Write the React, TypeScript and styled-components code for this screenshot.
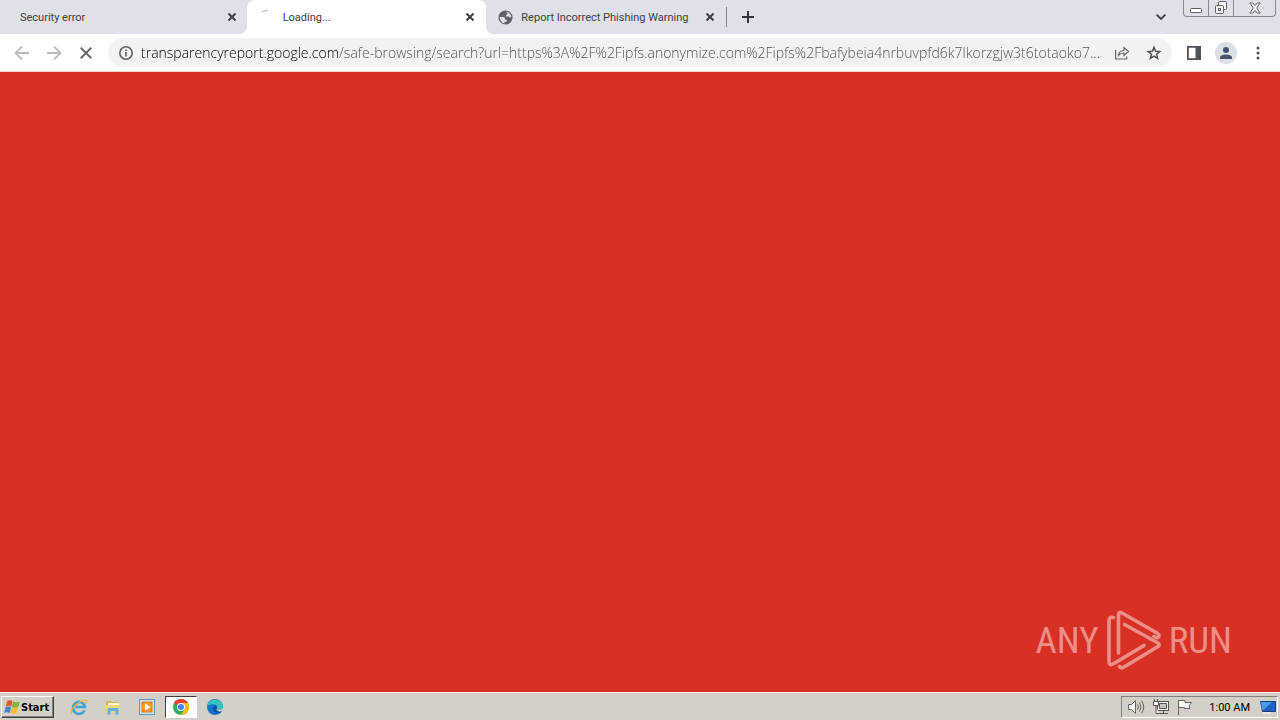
import React from "react";
import styled, { createGlobalStyle } from "styled-components";

const GlobalStyle = createGlobalStyle`
  * { box-sizing: border-box; }
  body { margin: 0; font-family: Roboto, "Noto Sans", sans-serif; }
  button { font: inherit; color: inherit; border: 0; padding: 0; background: none; cursor: default; }
  svg { display: block; flex: none; }
`;

const Desktop = styled.div`
  display: flex;
  flex-direction: column;
  min-height: 100vh;
  background: #d93025;
`;

const TabStrip = styled.header`
  display: flex;
  height: 34px;
  background: #dee1e8;
  color: #3c4043;
`;

const Tabs = styled.div`
  display: flex;
  flex: 0 1 726px;
  min-width: 0;
`;

const Tab = styled.div<{ $active?: boolean }>`
  position: relative;
  display: flex;
  align-items: center;
  flex: 1 1 240px;
  min-width: 0;
  padding: 0 11px 0 12px;
  background: ${(p) => (p.$active ? "#ffffff" : "transparent")};
  border-radius: 8px 8px 0 0;
  z-index: ${(p) => (p.$active ? 1 : 0)};

  &::before,
  &::after {
    content: "";
    display: ${(p) => (p.$active ? "block" : "none")};
    position: absolute;
    bottom: 0;
    width: 8px;
    height: 8px;
  }
  &::before {
    right: 100%;
    background: radial-gradient(circle at 0 0, transparent 8px, #ffffff 8px);
  }
  &::after {
    left: 100%;
    background: radial-gradient(circle at 100% 0, transparent 8px, #ffffff 8px);
  }
`;

const FirstTab = styled(Tab)`
  flex-basis: 247px;
  padding: 0 10px 0 20px;
`;

const TabTitle = styled.button`
  display: flex;
  align-items: center;
  gap: 8px;
  flex: 1;
  min-width: 0;
  height: 34px;
  font-size: 11px;
  line-height: 18px;
  white-space: nowrap;
  overflow: hidden;

  span { padding-top: 2px; }
`;

const IconButton = styled.button<{ $size?: number }>`
  display: flex;
  align-items: center;
  justify-content: center;
  flex: none;
  width: ${(p) => p.$size ?? 32}px;
  height: ${(p) => p.$size ?? 32}px;
`;

const NewTab = styled.div`
  display: flex;
  align-items: center;
  height: 34px;
  gap: 5px;

  &::before {
    content: "";
    width: 1px;
    height: 20px;
    background: #80868b;
  }
`;

const WindowArea = styled.div`
  display: flex;
  align-items: center;
  margin-left: auto;
  gap: 6px;
`;

const Caption = styled.div`
  display: flex;
  align-self: flex-start;
  height: 17px;
  margin-right: 4px;
  border: 1px solid #85898f;
  border-top: 0;
  border-radius: 0 0 4px 4px;
`;

const CaptionButton = styled.button<{ $wide?: boolean }>`
  display: flex;
  align-items: center;
  justify-content: center;
  width: ${(p) => (p.$wide ? 42 : 25)}px;

  &:first-child { width: 24px; }
  & + & { border-left: 1px solid #85898f; }
`;

const Toolbar = styled.nav`
  display: flex;
  align-items: center;
  height: 38px;
  padding: 0 6px;
  background: #ffffff;
  border-bottom: 1px solid #f3d5c8;
  color: #5f6368;
`;

const Omnibox = styled.form`
  display: flex;
  align-items: center;
  flex: 1;
  min-width: 0;
  height: 29px;
  margin: 0 6px;
  padding: 0 2px 0 10px;
  border-radius: 15px;
  background: #f0f2f4;
`;

const Address = styled.input`
  flex: 1;
  min-width: 0;
  height: 24px;
  margin: 0 6px 0 7px;
  padding: 0;
  border: 0;
  outline: 0;
  font-family: "Open Sans", "Noto Sans", sans-serif;
  font-weight: 300;
  font-size: 14px;
  line-height: 24px;
  text-overflow: ellipsis;
  color: #5f6368;
  background: linear-gradient(90deg, #000000 198px, #4a4e53 198px);
  background-clip: text;
  -webkit-text-fill-color: transparent;
`;

const Avatar = styled.span`
  display: flex;
  align-items: center;
  justify-content: center;
  width: 22px;
  height: 22px;
  border-radius: 50%;
  background: #dcdfe4;
`;

const Page = styled.main`
  display: flex;
  flex: 1;
  align-items: flex-end;
  justify-content: flex-end;
  padding: 0 48px 20px 0;
`;

const Watermark = styled.div`
  display: flex;
  align-items: center;
  gap: 7px;
  color: #eb8f87;
  font-family: "Roboto Condensed", "Liberation Sans Narrow", sans-serif;
  font-weight: 400;
  font-size: 37px;
  line-height: 62px;
`;

const Taskbar = styled.footer`
  display: flex;
  align-items: center;
  height: 28px;
  padding: 1px 2px 0 1px;
  background: #d4d0c8;
  border-top: 1px solid #f7eeea;
`;

const StartButton = styled.button`
  display: flex;
  align-items: center;
  gap: 1px;
  width: 53px;
  height: 22px;
  padding-left: 2px;
  margin-right: 9px;
  border: 1px solid;
  border-color: #ffffff #404040 #404040 #ffffff;
  box-shadow: inset -1px -1px 0 #808080;
  color: #000000;
  font-family: "DejaVu Sans Condensed", "DejaVu Sans", sans-serif;
  font-weight: 700;
  font-size: 11px;
`;

const Launcher = styled.button<{ $pressed?: boolean }>`
  display: flex;
  align-items: center;
  justify-content: center;
  width: 32px;
  height: 22px;
  margin-right: 2px;
  border: 1px solid;
  border-color: ${(p) => (p.$pressed ? "#404040 #ffffff #ffffff #404040" : "transparent")};
  background: ${(p) => (p.$pressed ? "#ffffff" : "transparent")};
`;

const Tray = styled.div`
  display: flex;
  align-items: center;
  gap: 8px;
  height: 22px;
  margin-left: auto;
  padding: 0 1px 0 6px;
  border: 1px solid;
  border-color: #808080 #ffffff #ffffff #808080;
  color: #000000;
  font-size: 11px;
`;

const Clock = styled.time`
  margin: 0 2px 0 8px;
  white-space: nowrap;
`;

const Cross = ({ size = 8, width = 2 }: { size?: number; width?: number }) => (
  <svg width={size} height={size} viewBox="0 0 8 8" stroke="currentColor" strokeWidth={(width * 8) / size} fill="none">
    <path d="M.5.5l7 7M7.5.5l-7 7" />
  </svg>
);

const Arrow = ({ back }: { back?: boolean }) => (
  <svg width="16" height="16" viewBox="0 0 16 16" fill="none" stroke="#babcbe" strokeWidth="1.8">
    <path d={back ? "M15 8H2M8 1.5L1.5 8 8 14.5" : "M1 8h13M8 1.5L14.5 8 8 14.5"} />
  </svg>
);

export default function App() {
  return (
    <Desktop>
      <GlobalStyle />
      <TabStrip>
        <Tabs>
          <FirstTab>
            <TabTitle><span>Security error</span></TabTitle>
            <IconButton $size={10} aria-label="Close Security error"><Cross /></IconButton>
          </FirstTab>
          <Tab $active>
            <TabTitle>
              <svg width="16" height="16" viewBox="0 0 16 16" fill="none" stroke="#c6c8cb" strokeWidth="1.5">
                <path d="M3 2.8Q5.500 1 8.500 1.500" />
              </svg>
              <span>Loading...</span>
            </TabTitle>
            <IconButton $size={10} aria-label="Close Loading"><Cross /></IconButton>
          </Tab>
          <Tab>
            <TabTitle>
              <svg width="15" height="15" viewBox="0 0 14 14">
                <circle cx="7" cy="7" r="6.600" fill="#5f6368" />
                <path d="M1.500 6.500h3q2 0 2 1.500t2 1.500q0 1.500-1.500 1.500t-1 1.700Q2 11.500 1.500 6.500zM8 1.600q4 .8 4.500 5-1.500 1-2.500-.6H7.500V4.500q1.500 0 1.300-1.400Q8 2.700 8 1.600z" fill="#dee1e8" />
              </svg>
              <span>Report Incorrect Phishing Warning</span>
            </TabTitle>
            <IconButton $size={10} aria-label="Close Report Incorrect Phishing Warning"><Cross /></IconButton>
          </Tab>
        </Tabs>
        <NewTab>
          <IconButton aria-label="New tab">
            <svg width="12" height="12" viewBox="0 0 12 12" stroke="#303338" strokeWidth="2"><path d="M6 0v12M0 6h12" /></svg>
          </IconButton>
        </NewTab>
        <WindowArea>
          <IconButton aria-label="Search tabs">
            <svg width="10" height="6" viewBox="0 0 10 6" fill="none" stroke="#3c4043" strokeWidth="1.800"><path d="M.6.6L5 5 9.400.6" /></svg>
          </IconButton>
          <Caption>
            <CaptionButton aria-label="Minimize">
              <svg width="12" height="14" viewBox="0 0 12 14" fill="#fff" stroke="#5b5f66"><rect x=".5" y="7.500" width="11" height="4" rx="1" /></svg>
            </CaptionButton>
            <CaptionButton aria-label="Restore">
              <svg width="14" height="14" viewBox="0 0 14 14" fill="#f5f6f8" stroke="#5b5f66">
                <rect x="4.500" y=".5" width="8" height="8" rx="1" />
                <rect x="1.500" y="4.500" width="8" height="8" rx="1" />
                <rect x="4.500" y="7.500" width="2" height="2" />
              </svg>
            </CaptionButton>
            <CaptionButton $wide aria-label="Close window">
              <svg width="12" height="12" viewBox="0 0 12 12" fill="#fff" stroke="#5b5f66" strokeLinejoin="round">
                <path d="M.8 1h3L6 3.500 8.200 1h3L7.700 6l3.500 5h-3L6 8.500 3.800 11h-3L4.300 6z" />
              </svg>
            </CaptionButton>
          </Caption>
        </WindowArea>
      </TabStrip>
      <Toolbar>
        <IconButton aria-label="Back"><Arrow back /></IconButton>
        <IconButton aria-label="Forward"><Arrow /></IconButton>
        <IconButton aria-label="Stop loading"><Cross size={12} width={1.8} /></IconButton>
        <Omnibox>
          <svg width="16" height="16" viewBox="0 0 16 16" fill="none" stroke="#5f6368" strokeWidth="1.600">
            <circle cx="8" cy="8" r="6.200" /><path d="M8 7v4.500M8 4.400V6" />
          </svg>
          <Address
            aria-label="Address"
            readOnly
            value="transparencyreport.google.com/safe-browsing/search?url=https%3A%2F%2Fipfs.anonymize.com%2Fipfs%2Fbafybeia4nrbuvpfd6k7lkorzgjw3t6totaoko7..."
          />
          <IconButton type="button" aria-label="Share">
            <svg width="16" height="16" viewBox="0 0 16 16" fill="none" stroke="#5f6368" strokeWidth="1.200">
              <path d="M1.600 5v9h11v-2.500M4.500 10.500Q5 5.500 10 5.500V2.500l4.500 4-4.500 4V8Q6.500 8 4.500 10.500z" />
            </svg>
          </IconButton>
          <IconButton type="button" aria-label="Bookmark this tab">
            <svg width="16" height="16" viewBox="0 0 16 16" fill="none" stroke="#4d5156" strokeWidth="1.500">
              <path d="M8 2.300l1.600 3.900 4.200.3-3.200 2.800 1 4.100L8 11.200l-3.600 2.200 1-4.100-3.200-2.800 4.200-.3z" />
            </svg>
          </IconButton>
        </Omnibox>
        <IconButton aria-label="Side panel">
          <svg width="14" height="14" viewBox="0 0 14 14" fill="#4f5257">
            <path fillRule="evenodd" d="M0 0h14v14H0zM1.800 1.800v10.400H8.500V1.800z" />
          </svg>
        </IconButton>
        <IconButton aria-label="Profile">
          <Avatar>
            <svg width="12" height="12" viewBox="0 0 12 12" fill="#47536e">
              <circle cx="6" cy="3" r="3" /><path d="M0 12V10Q1 7.500 6 7.500T12 10v2z" />
            </svg>
          </Avatar>
        </IconButton>
        <IconButton aria-label="Menu">
          <svg width="4" height="14" viewBox="0 0 4 14" fill="#4f5257">
            <circle cx="2" cy="2" r="1.500" /><circle cx="2" cy="7" r="1.500" /><circle cx="2" cy="12" r="1.500" />
          </svg>
        </IconButton>
      </Toolbar>
      <Page>
        <Watermark>
          <span>ANY</span>
          <svg width="56" height="62" viewBox="0 0 56 62" fill="none" stroke="#eb8f87" strokeWidth="3.600" strokeLinejoin="round" strokeLinecap="round">
            <path d="M12.500 43V5Q12.500 1 16 3L51 23Q54 25 52.500 27 51 28.500 48 26.500" />
            <path d="M7.500 7.500Q3 6.500 3 11V51Q3 56 7 54L38 35.500" />
            <path d="M18.500 14.500L52 33Q54.500 34.500 52 36.500L18 57Q15 59 13.500 56.500" />
          </svg>
          <span>RUN</span>
        </Watermark>
      </Page>
      <Taskbar>
        <StartButton>
          <svg width="16" height="16" viewBox="0 0 16 16">
            <path d="M3.200 2Q6 .5 8.500 2L7.300 7.700Q5 6 1.800 7.500z" fill="#e4572b" />
            <path d="M9 2.500q3 1.500 6.800 0l-1.500 5.700Q11 9.500 7.800 8z" fill="#7fb93c" />
            <path d="M1.700 8.100Q4.500 6.800 7.100 8.300l-1.300 5.700Q3.500 12.500.2 13.800z" fill="#3e8ad8" />
            <path d="M7.600 8.600q3 1.500 6.500 0l-1.500 5.700q-3 1.300-6.300 0z" fill="#f7bf2c" />
          </svg>
          Start
        </StartButton>
        <Launcher aria-label="Internet Explorer">
          <svg width="18" height="18" viewBox="0 0 18 18" fill="none">
            <path d="M14.500 12.500A6 6 0 1 1 15 9H5.500" stroke="#3ca4dc" strokeWidth="2.600" />
            <path d="M2 16Q-1 13 6 7T16.500 2.500q1 1-.8 3.300" stroke="#e8b634" strokeWidth="1.300" />
          </svg>
        </Launcher>
        <Launcher aria-label="File Explorer">
          <svg width="16" height="16" viewBox="0 0 16 16">
            <path d="M1 2h5l1 1h7v11H1z" fill="#dcb552" />
            <path d="M3 4h11v4H3z" fill="#fff8d8" />
            <path d="M1 6h14v8H1z" fill="#f3d577" />
            <path d="M2.500 15.500v-5q0-1.500 1.500-1.500h8q1.500 0 1.500 1.500v5H10.500V12h-5v3.500z" fill="#5fb2df" />
          </svg>
        </Launcher>
        <Launcher aria-label="Media Player">
          <svg width="16" height="16" viewBox="0 0 16 16">
            <rect x=".5" y=".5" width="15" height="15" fill="#c9e1f2" stroke="#5b98c7" />
            <rect x="2.500" y="2.500" width="11" height="11" rx="1" fill="#ef7d16" />
            <circle cx="8" cy="8" r="4.800" fill="#f59b31" />
            <path d="M6 4.500L11.500 8 6 11.500z" fill="#fff" />
          </svg>
        </Launcher>
        <Launcher $pressed aria-label="Chrome">
          <svg width="16" height="16" viewBox="0 0 16 16">
            <circle cx="8" cy="8" r="8" fill="#34a853" />
            <path d="M8 8L1.070 4A8 8 0 0 1 14.930 4z" fill="#ea4335" />
            <path d="M8 8V4h6.930A8 8 0 0 1 8 16l3.460-6z" fill="#fbbc05" />
            <circle cx="8" cy="8" r="4" fill="#fff" /><circle cx="8" cy="8" r="3" fill="#4285f4" />
          </svg>
        </Launcher>
        <Launcher aria-label="Edge">
          <svg width="16" height="16" viewBox="0 0 16 16">
            <circle cx="8" cy="8" r="8" fill="#1477c8" />
            <path d="M.2 7A8 8 0 0 1 15.900 7Q16 11 11.500 10.700 9.500 10.500 10 9 10.800 6.800 8 5.600 4 4.500.2 7z" fill="#35c3c0" />
            <path d="M10 9Q8.500 11.500 12 12.200q2 .3 3.200-.7-1 1.700-2.700 2.700Q6 14 6 10q0-3 3-3.500 1.500 1 1 2.500z" fill="#124f9c" />
            <path d="M10 9q-.8 1.600 1.500 1.800 3 .3 4.400-1.700l-.2 2.500q-1.800 1.100-3.700.8Q8.500 11.500 10 9z" fill="#d4d0c8" />
          </svg>
        </Launcher>
        <Tray>
          <svg width="17" height="16" viewBox="0 0 17 16" fill="#f8f8f8" stroke="#66655f">
            <path d="M.5 5.500h3l4-4v13l-4-4h-3z" /><path d="M9.500 5.500q1.500 2.500 0 5M11.500 3.500q3 4.500 0 9M13.500 1.500q4.500 6.500 0 13" fill="none" />
          </svg>
          <svg width="16" height="16" viewBox="0 0 16 16" fill="#f4f4f2" stroke="#55544f">
            <rect x="4.500" y="2.500" width="11" height="9" /><path d="M6.500 4.500h7v5h-7z" fill="#c9c6be" /><path d="M6 14.500h9M10.500 12v2M.5 2.500h5v4h-5zM1.500 0v2M4.500 0v2M3 7v7.500h3" />
          </svg>
          <svg width="16" height="16" viewBox="0 0 16 16" fill="#fafafa" stroke="#66655f">
            <path d="M1.500 1v15M2 1.500h6v2h6.500L12 7l1 2.500H7.500V8.500H2" />
          </svg>
          <Clock>1:00 AM</Clock>
          <svg width="16" height="14" viewBox="0 0 16 14">
            <path d="M.5 1.500h15v10H2.500z" fill="#1d62bd" stroke="#153f80" />
            <path d="M1 2h11L4 9.500H2z" fill="#4b9be8" /><path d="M3 12h8v1.500H3z" fill="#e9eef5" />
          </svg>
        </Tray>
      </Taskbar>
    </Desktop>
  );
}
